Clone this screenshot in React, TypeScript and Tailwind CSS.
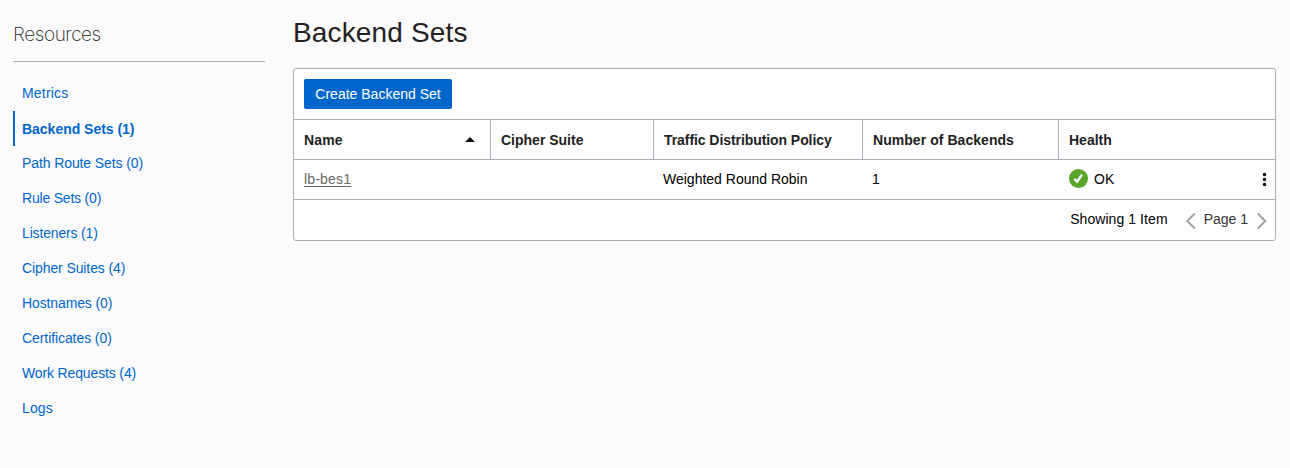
const navItems = [
  { label: "Metrics", tracking: "tracking-[0.2px]" },
  { label: "Backend Sets (1)", tracking: "tracking-[-0.02px]", active: true },
  { label: "Path Route Sets (0)", tracking: "tracking-[-0.1px]" },
  { label: "Rule Sets (0)", tracking: "tracking-[-0.2px]" },
  { label: "Listeners (1)", tracking: "tracking-[-0.16px]" },
  { label: "Cipher Suites (4)", tracking: "tracking-[-0.1px]" },
  { label: "Hostnames (0)", tracking: "tracking-[-0.12px]" },
  { label: "Certificates (0)", tracking: "tracking-[-0.08px]" },
  { label: "Work Requests (4)", tracking: "tracking-[-0.14px]" },
  { label: "Logs", tracking: "tracking-[0.1px]" },
];

function Sidebar() {
  return (
    <aside className="ml-[13px] w-[252px] shrink-0">
      <h2 className="h-[62px] border-b border-[#aeafbd] pt-[21px] font-['Inter','Liberation_Sans',sans-serif] text-[19px] leading-[28px] font-extralight tracking-[-0.42px] text-[#222]">
        Resources
      </h2>
      <nav className="mt-[14px] flex flex-col">
        {navItems.map((item) => (
          <a
            key={item.label}
            href="#"
            className={
              item.active
                ? "flex h-[35px] items-center border-l-2 border-[#0066cc] pl-[7px] pt-px font-bold text-[#0066cc]"
                : "flex h-[35px] items-center pb-[2px] pl-[9px] text-[#0066cc]"
            }
          >
            <span className={item.tracking}>{item.label}</span>
          </a>
        ))}
      </nav>
    </aside>
  );
}

function BackendTable() {
  return (
    <section className="h-[173px] w-[983px] rounded-[3px] border border-[#a9afb8] bg-white">
      <div className="flex h-[50px] items-center pl-[10px]">
        <button className="h-[30px] w-[148px] rounded-[2px] bg-[#0066cc] text-[14px] text-white">
          Create Backend Set
        </button>
      </div>
      <div className="grid h-[41px] grid-cols-[197px_163px_209px_196px_1fr] border-y border-[#a9afb8] font-bold text-[#222]">
        <div className="flex items-center justify-between border-r border-[#a9afb8] pl-[10px] pr-[15px]">
          <span className="tracking-[0.15px]">Name</span>
          <svg width="10" height="5" viewBox="0 0 10 5" fill="#111">
            <path d="M5 0 10 5H0Z" />
          </svg>
        </div>
        <div className="flex items-center border-r border-[#a9afb8] pl-[10px]">Cipher Suite</div>
        <div className="flex items-center border-r border-[#a9afb8] pl-[10px] tracking-[-0.07px]">
          Traffic Distribution Policy
        </div>
        <div className="flex items-center border-r border-[#a9afb8] pl-[10px] tracking-[0.05px]">
          Number of Backends
        </div>
        <div className="flex items-center pl-[10px]">Health</div>
      </div>
      <div className="grid h-[40px] grid-cols-[197px_163px_209px_196px_1fr] items-center border-b border-[#a9afb8] text-black">
        <div className="pb-[2px] pl-[10px]">
          <a href="#" className="tracking-[0.18px] text-[#666] underline underline-offset-2">
            lb-bes1
          </a>
        </div>
        <div />
        <div className="pb-[2px] pl-[9px]">Weighted Round Robin</div>
        <div className="pb-[2px] pl-[9px]">1</div>
        <div className="flex items-center pl-[10px] pr-[8px]">
          <svg className="-mt-[2px]" width="19" height="19" viewBox="0 0 19 19" fill="none">
            <circle cx="9.5" cy="9.5" r="9.5" fill="#5aa528" />
            <path d="m5.2 9.7 2.9 3 5-7.2" stroke="#fff" strokeWidth="2.2" />
          </svg>
          <span className="ml-[6px] pb-[2px]">OK</span>
          <svg className="ml-auto" width="5" height="15" viewBox="0 0 5 15" fill="#000">
            <circle cx="2.5" cy="2.5" r="1.65" />
            <circle cx="2.5" cy="7.5" r="1.65" />
            <circle cx="2.5" cy="12.5" r="1.65" />
          </svg>
        </div>
      </div>
      <div className="flex h-[40px] items-center justify-end pr-[8px]">
        <span className="pb-[2px] tracking-[0.07px] text-black">Showing 1 Item</span>
        <svg className="ml-[17px] mt-[2px]" width="11" height="18" viewBox="0 0 11 18" fill="none" stroke="#a3a3a3" strokeWidth="2">
          <path d="M9.8 1.5 2.3 9l7.5 7.5" />
        </svg>
        <span className="ml-[8px] pb-[2px] text-[#333]">Page 1</span>
        <svg className="ml-[8px] mt-[2px]" width="11" height="18" viewBox="0 0 11 18" fill="none" stroke="#a3a3a3" strokeWidth="2">
          <path d="M1.8 1.5 9.3 9l-7.5 7.5" />
        </svg>
      </div>
    </section>
  );
}

export default function App() {
  return (
    <div className="flex h-[468px] w-full overflow-hidden bg-[#fbfbfb] font-['Liberation_Sans',Arial,sans-serif] text-[14px] leading-[20px]">
      <Sidebar />
      <main className="ml-[28px]">
        <h1 className="h-[68px] pt-[16px] text-[28px] leading-[34px] tracking-[0.15px] text-[#222]">
          Backend Sets
        </h1>
        <BackendTable />
      </main>
    </div>
  );
}
